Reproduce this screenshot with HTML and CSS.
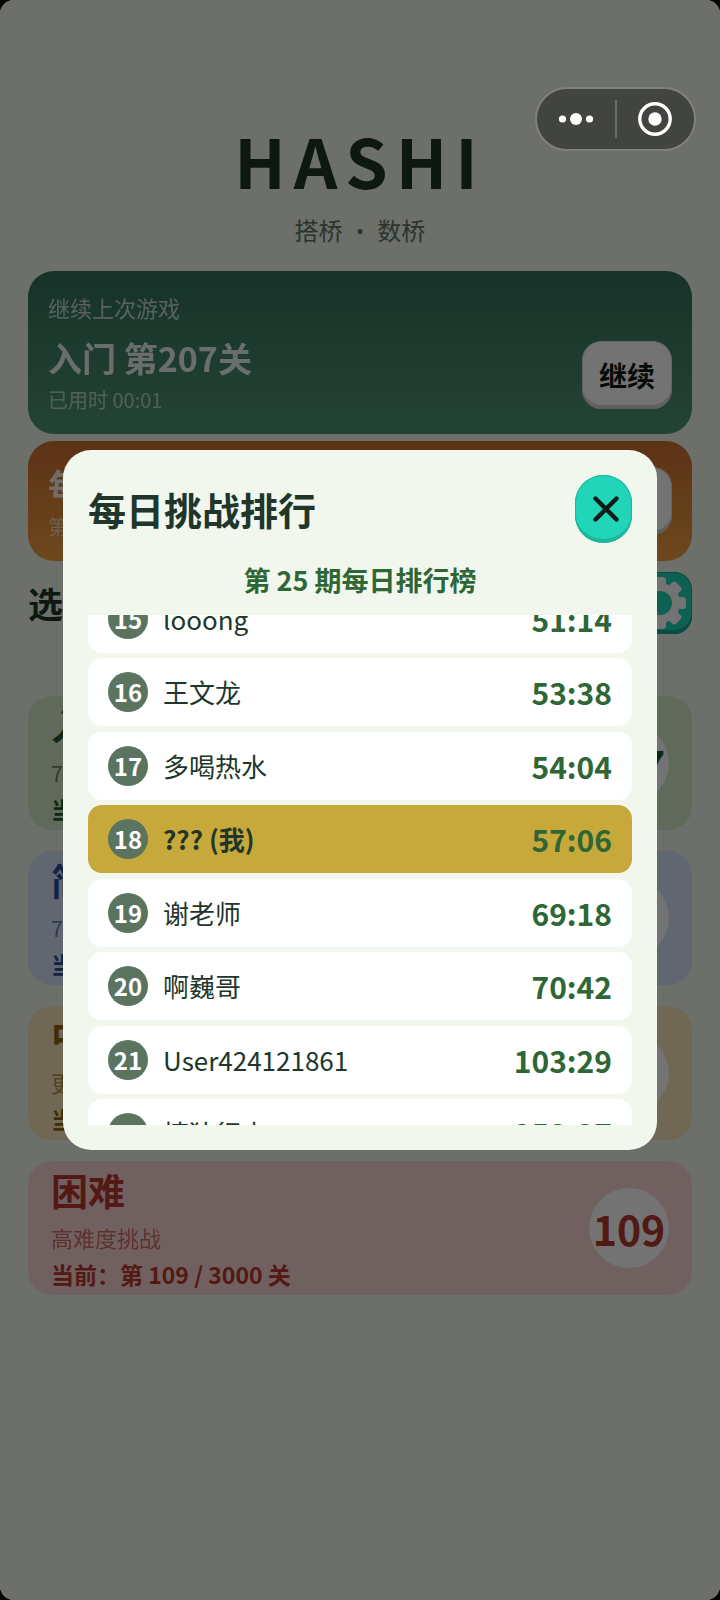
FILE: index.html
```
<!DOCTYPE html>
<html lang="zh-CN">
<head>
<meta charset="utf-8">
<meta name="viewport" content="width=device-width, initial-scale=1">
<title>HASHI</title>
<link rel="stylesheet" href="styles.css">
</head>
<body>
<div class="screen">
  <main class="home">
    <header class="brand">
      <h1 class="brand-name">HASHI</h1>
      <p class="brand-sub">搭桥 ・ 数桥</p>
    </header>

    <section class="banner banner-green">
      <div class="banner-text">
        <p class="banner-label">继续上次游戏</p>
        <h2 class="banner-title">入门 第207关</h2>
        <p class="banner-meta">已用时 00:01</p>
      </div>
      <button class="btn-light btn-low" type="button">继续</button>
    </section>

    <section class="banner banner-orange">
      <div class="banner-text">
        <h2 class="banner-title">每日挑战</h2>
        <p class="banner-meta">第 25 期</p>
      </div>
      <button class="btn-light" type="button">挑战</button>
    </section>

    <div class="section-head">
      <h2 class="section-title">选择难度</h2>
      <button class="btn-gear" type="button" aria-label="设置">
        <svg class="gear" viewBox="-26 -26 52 52" aria-hidden="true">
          <defs><mask id="hole"><rect x="-26" y="-26" width="52" height="52" fill="#fff"/><circle r="12" fill="#000"/></mask></defs>
          <g fill="currentColor" mask="url(#hole)">
            <circle r="20"/>
            <rect x="-6" y="-26" width="12" height="52" rx="3"/>
            <rect x="-6" y="-26" width="12" height="52" rx="3" transform="rotate(45)"/>
            <rect x="-6" y="-26" width="12" height="52" rx="3" transform="rotate(90)"/>
            <rect x="-6" y="-26" width="12" height="52" rx="3" transform="rotate(135)"/>
          </g>
        </svg>
      </button>
    </div>

    <div class="levels">
      <section class="level level-green">
        <div><h3 class="level-name">入门</h3><p class="level-desc">7×7 棋盘</p><p class="level-now">当前：第 207 / 3000 关</p></div>
        <span class="level-num">207</span>
      </section>
      <section class="level level-blue">
        <div><h3 class="level-name">简单</h3><p class="level-desc">7×7 棋盘</p><p class="level-now">当前：第 1 / 3000 关</p></div>
        <span class="level-num">1</span>
      </section>
      <section class="level level-yellow">
        <div><h3 class="level-name">中等</h3><p class="level-desc">更大棋盘</p><p class="level-now">当前：第 1 / 3000 关</p></div>
        <span class="level-num">1</span>
      </section>
      <section class="level level-red">
        <div><h3 class="level-name">困难</h3><p class="level-desc">高难度挑战</p><p class="level-now">当前：第 109 / 3000 关</p></div>
        <span class="level-num">109</span>
      </section>
    </div>
  </main>

  <div class="overlay">
    <div class="modal" role="dialog" aria-labelledby="rank-title">
      <header class="modal-head">
        <h2 class="modal-title" id="rank-title">每日挑战排行</h2>
        <button class="btn-close" type="button" aria-label="关闭">
          <svg class="cross" viewBox="0 0 26 26" aria-hidden="true"><path d="M2.500 2.500 23.500 23.500M23.500 2.500 2.500 23.500" stroke="currentColor" stroke-width="4.400" stroke-linecap="round"/></svg>
        </button>
      </header>
      <p class="modal-sub">第 25 期每日排行榜</p>
      <div class="rank-view">
        <ol class="ranks">
          <li class="rank"><span class="badge">15</span><span class="name">looong</span><span class="time">51:14</span></li>
          <li class="rank"><span class="badge">16</span><span class="name">王文龙</span><span class="time">53:38</span></li>
          <li class="rank"><span class="badge">17</span><span class="name">多喝热水</span><span class="time">54:04</span></li>
          <li class="rank rank-me"><span class="badge">18</span><span class="name">??? (我)</span><span class="time">57:06</span></li>
          <li class="rank"><span class="badge">19</span><span class="name">谢老师</span><span class="time">69:18</span></li>
          <li class="rank"><span class="badge">20</span><span class="name">啊巍哥</span><span class="time">70:42</span></li>
          <li class="rank"><span class="badge">21</span><span class="name">User424121861</span><span class="time">103:29</span></li>
          <li class="rank"><span class="badge">22</span><span class="name">慎独行水</span><span class="time">253:37</span></li>
        </ol>
      </div>
    </div>
  </div>

  <div class="capsule">
    <button class="capsule-btn" type="button" aria-label="更多">
      <svg class="dots" viewBox="0 0 36 14" aria-hidden="true"><g fill="currentColor"><circle cx="4.500" cy="7" r="3.600"/><circle cx="18" cy="7" r="6"/><circle cx="31.500" cy="7" r="3.600"/></g></svg>
    </button>
    <button class="capsule-btn" type="button" aria-label="退出">
      <svg class="ring" viewBox="0 0 34 34" aria-hidden="true"><circle cx="17" cy="17" r="15.200" fill="none" stroke="currentColor" stroke-width="3.400"/><circle cx="17" cy="17" r="6.700" fill="currentColor"/></svg>
    </button>
  </div>
</div>
</body>
</html>
```
FILE: styles.css
```
* { box-sizing: border-box; }

html { background: #000; }

body {
  margin: 0;
  font-family: "Noto Sans CJK SC", "Noto Sans", sans-serif;
  color: #20362b;
}

h1, h2, h3, p, ol { margin: 0; padding: 0; }
button { font-family: inherit; border: 0; padding: 0; }
svg { display: block; }

.screen {
  position: relative;
  min-height: 100vh;
  background: #f2f6ea;
  border-radius: 14px;
  overflow: hidden;
}

.home { padding: 120px 28px 0; }

.brand { text-align: center; padding-bottom: 23px; }
.brand-name { font-size: 68px; line-height: 80px; letter-spacing: 8px; }
.brand-sub { margin-top: 12px; font-size: 24px; line-height: 36px; color: #5c7464; }

.banner {
  display: flex;
  align-items: center;
  justify-content: space-between;
  padding: 20px;
  border-radius: 26px;
  color: #fff;
}
.banner-green { background: linear-gradient(#34705c, #4e9773); }
.banner-orange { margin-top: 7px; padding: 20px; background: linear-gradient(#cc702f, #f2a043); }
.banner-label { font-size: 22px; line-height: 32px; margin-bottom: 11px; opacity: .7; }
.banner-title { font-size: 34px; line-height: 48px; opacity: .9; }
.banner-meta { font-size: 20px; line-height: 28px; margin-top: 4px; opacity: .6; }

.btn-light {
  width: 90px;
  height: 68px;
  border-radius: 20px;
  background: #fff;
  color: #0c1410;
  box-shadow: inset 0 -4px #d2d2d2, inset 0 0 0 1px #dcdcdc;
  font-size: 28px;
  font-weight: 700;
}
.btn-low { align-self: flex-end; margin-bottom: 5px; }

.section-head {
  display: flex;
  align-items: center;
  justify-content: space-between;
  margin: 11px 0 62px;
}
.section-title { font-size: 35px; line-height: 48px; }
.btn-gear {
  display: grid;
  place-items: center;
  width: 64px;
  height: 62px;
  border-radius: 18px;
  background: #20d5b8;
  color: #fff;
  box-shadow: inset 0 -4px #18a890, inset 0 0 0 1px #18a890;
}
.gear { width: 52px; height: 52px; }

.levels { display: grid; gap: 21px; }
.level {
  display: flex;
  align-items: center;
  justify-content: space-between;
  padding: 5px 23px;
  border-radius: 24px;
}
.level-green { background: #d2ebc7; color: #1e5b2e; }
.level-blue { background: #d6e5fb; color: #26509a; }
.level-yellow { background: #fbe5bd; color: #8a6410; }
.level-red { background: #f9d6d4; color: #b8382e; }
.level-name { font-size: 37px; line-height: 48px; }
.level-desc { margin-top: 7px; font-size: 22px; line-height: 32px; opacity: .65; }
.level-now { margin-top: 5px; font-size: 23px; line-height: 32px; font-weight: 700; }
.level-num {
  display: grid;
  place-items: center;
  width: 80px;
  height: 80px;
  border-radius: 50%;
  background: #fff;
  font-size: 41px;
  line-height: 48px;
  font-weight: 700;
}

.overlay {
  position: absolute;
  inset: 0;
  display: flex;
  align-items: center;
  padding: 0 63px;
  background: rgba(0, 0, 0, .55);
}
.modal {
  flex: 1;
  padding: 25px;
  border-radius: 28px;
  background: #f1f7ed;
}
.modal-head { display: flex; align-items: center; justify-content: space-between; }
.modal-title { font-size: 38px; line-height: 56px; }
.btn-close {
  display: grid;
  place-items: center;
  width: 57px;
  height: 68px;
  padding-left: 4px;
  border-radius: 28px;
  background: #20d5b8;
  color: #101a18;
  box-shadow: inset 0 -4px #1cb89e, inset 0 0 0 1px #1cb89e;
}
.cross { width: 26px; height: 26px; }
.modal-sub { margin: 19px 0 17px; text-align: center; font-size: 27px; line-height: 36px; font-weight: 700; color: #2f6636; }

.rank-view { height: 510px; overflow: hidden; }
.ranks {
  display: flex;
  flex-direction: column;
  justify-content: space-between;
  height: 582px;
  margin-top: -30px;
  list-style: none;
}
.rank {
  display: flex;
  align-items: center;
  gap: 15px;
  height: 68px;
  padding: 0 20px;
  border-radius: 14px;
  background: #fff;
}
.rank-me { background: #c6a93a; font-weight: 700; }
.badge {
  display: grid;
  place-items: center;
  width: 40px;
  height: 40px;
  border-radius: 50%;
  background: #5a7460;
  color: #fff;
  font-size: 24px;
  line-height: 36px;
  font-weight: 700;
}
.name { flex: 1; font-size: 26px; line-height: 36px; }
.time { font-size: 30px; line-height: 44px; font-weight: 700; color: #2f6636; }

.capsule {
  position: absolute;
  top: 87px;
  right: 24px;
  display: flex;
  width: 161px;
  height: 64px;
  padding: 11px 0;
  border: 2px solid #7f817c;
  border-radius: 32px;
  background: #424440;
}
.capsule-btn { flex: 1; display: grid; place-items: center; background: none; color: #fff; }
.capsule-btn + .capsule-btn { border-left: 2px solid #6b6d69; }
.dots { width: 36px; height: 14px; }
.ring { width: 34px; height: 34px; }
```
